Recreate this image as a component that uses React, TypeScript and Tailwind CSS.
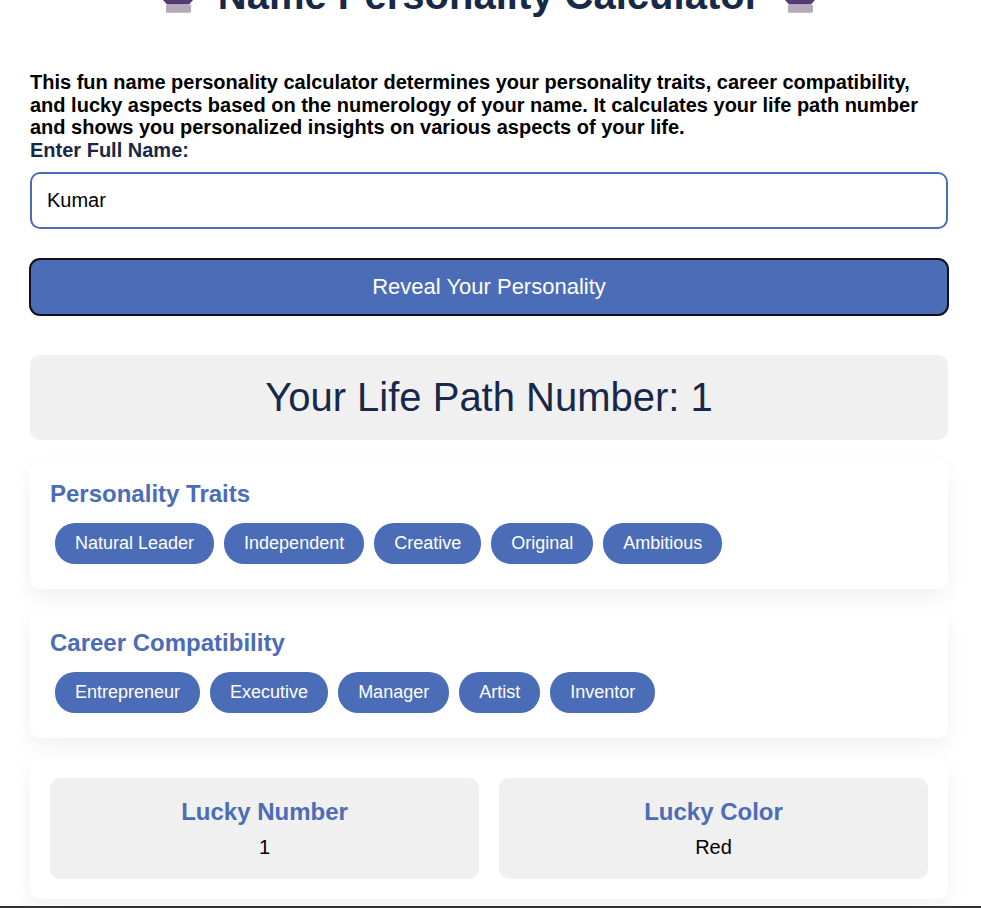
const traits = ['Natural Leader', 'Independent', 'Creative', 'Original', 'Ambitious'];
const careers = ['Entrepreneur', 'Executive', 'Manager', 'Artist', 'Inventor'];

function BallBase() {
  return (
    <svg width="30" height="14" viewBox="0 0 30 14" className="mt-[25px] shrink-0">
      <path d="M0 0 H30 L26 4.5 H4 Z" fill="#553a73" />
      <rect x="3" y="4.5" width="25" height="8.2" rx="1.5" fill="#b4a9bd" />
    </svg>
  );
}

function Tag({ label }: { label: string }) {
  return (
    <span className="m-[5px] rounded-[20px] bg-[#4b6cb7] px-5 py-2 text-[18px] leading-[25px] text-white">
      {label}
    </span>
  );
}

function LuckyBox({ title, value }: { title: string; value: string }) {
  return (
    <div className="flex-1 rounded-[10px] bg-[#f0f0f0] p-5 text-center">
      <h3 className="text-[24px] leading-[28px] font-bold text-[#4b6cb7]">{title}</h3>
      <p className="mt-[10px] text-[20px] leading-[23px] text-black">{value}</p>
    </div>
  );
}

export default function App() {
  return (
    <div className="h-[908px] overflow-hidden bg-white font-['Liberation_Sans',Arial,sans-serif]">
      <div className="flex h-[906px] flex-col overflow-hidden pr-[33px] pl-[30px]">
        <h1 className="mt-[-25px] flex h-[40px] shrink-0 items-start justify-center gap-[25px] text-[40px] leading-[40px] font-bold whitespace-nowrap text-[#182848]">
          <BallBase />
          <span>Name Personality Calculator</span>
          <BallBase />
        </h1>
        <p className="mt-[56px] text-[20px] leading-[22.5px] font-bold text-black">
          This fun name personality calculator determines your personality traits, career compatibility, and lucky aspects based on the numerology of your name. It calculates your life path number and shows you personalized insights on various aspects of your life.
        </p>
        <label className="text-[20px] leading-[22.5px] font-bold text-[#182848]">Enter Full Name:</label>
        <input
          readOnly
          value="Kumar"
          className="mt-[11px] h-[57px] w-full shrink-0 rounded-[10px] border-2 border-[#4b6cb7] px-[15px] text-[20px] text-black outline-none"
        />
        <button className="mx-[-1px] mt-[29px] h-[58px] w-[920px] shrink-0 rounded-[11px] border-2 border-[#10121c] bg-[#4b6cb7] pb-[2px] text-[22px] text-white">
          Reveal Your Personality
        </button>
        <div className="mt-[39px] flex h-[85px] shrink-0 items-center justify-center rounded-[10px] bg-[#f0f0f0] pb-[2px] text-[40px] text-[#182848]">
          Your Life Path Number: 1
        </div>
        <section className="mt-5 h-[129px] shrink-0 rounded-[10px] bg-white p-5 shadow-[0_8px_20px_rgba(0,0,0,0.06)]">
          <h3 className="text-[24px] leading-[28px] font-bold text-[#4b6cb7]">Personality Traits</h3>
          <div className="mt-[10px] flex flex-wrap">
            {traits.map((t) => <Tag key={t} label={t} />)}
          </div>
        </section>
        <section className="mt-5 h-[129px] shrink-0 rounded-[10px] bg-white p-5 shadow-[0_8px_20px_rgba(0,0,0,0.06)]">
          <h3 className="text-[24px] leading-[28px] font-bold text-[#4b6cb7]">Career Compatibility</h3>
          <div className="mt-[10px] flex flex-wrap">
            {careers.map((c) => <Tag key={c} label={c} />)}
          </div>
        </section>
        <section className="mt-5 flex shrink-0 gap-5 rounded-[10px] bg-white p-5 shadow-[0_8px_20px_rgba(0,0,0,0.06)]">
          <LuckyBox title="Lucky Number" value="1" />
          <LuckyBox title="Lucky Color" value="Red" />
        </section>
      </div>
      <div className="h-[2px] bg-[#333333]" />
    </div>
  );
}
